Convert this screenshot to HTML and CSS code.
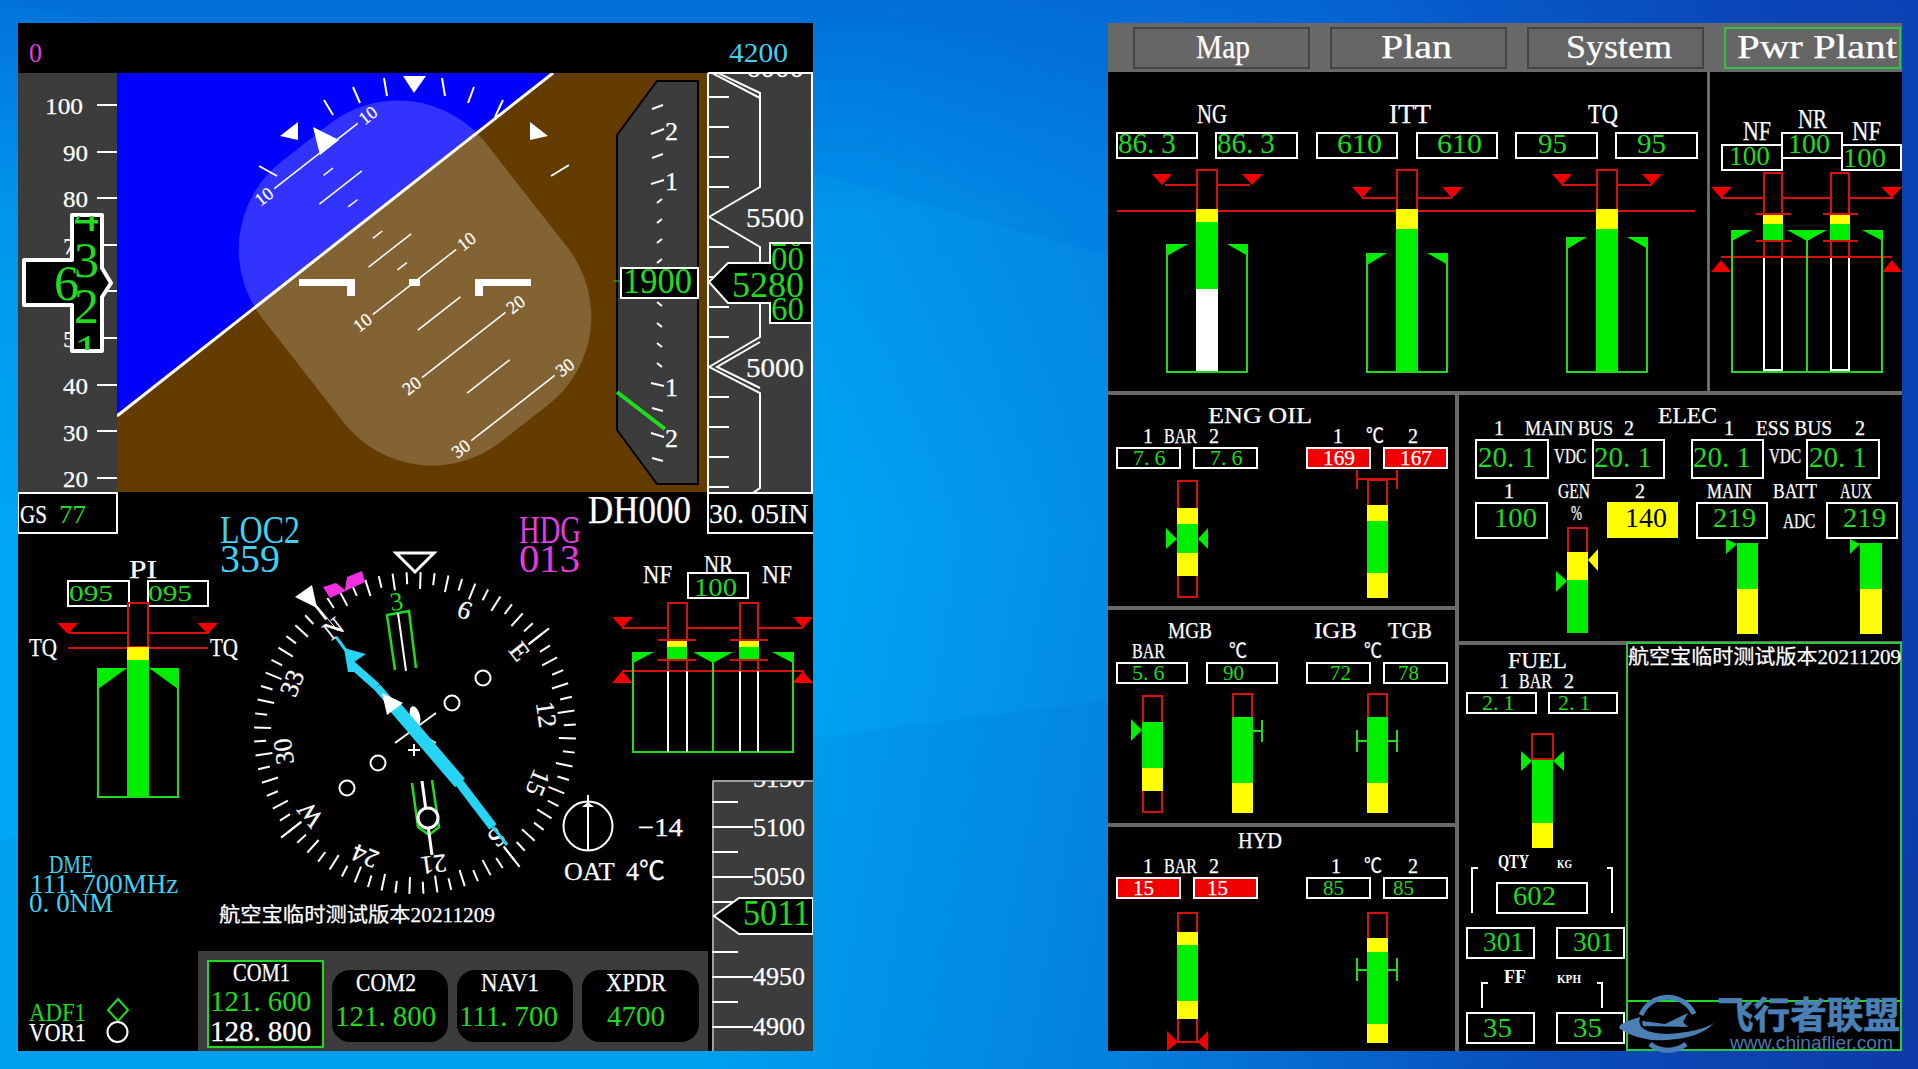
FILE: index.html
```html
<!DOCTYPE html>
<html lang="zh">
<head>
<meta charset="utf-8">
<title>MFD / PFD</title>
<link rel="stylesheet" href="styles.css">
</head>
<body>
<svg class="beams" viewBox="0 0 1918 1069">
  <polygon class="beam-up" points="0,0 1918,0 1918,487 813,172 0,0"/>
  <polygon class="beam-down" points="0,1069 1918,1069 1918,596 813,738 0,840"/>
</svg>

<section class="pfd">
<svg viewBox="18 23 795 1028">
  <defs>
    <clipPath id="att"><rect x="117" y="73" width="591" height="419"/></clipPath>
    <clipPath id="spd"><rect x="72" y="216" width="30" height="134"/></clipPath>
    <clipPath id="altc"><rect x="771" y="244" width="40" height="78"/></clipPath>
    <clipPath id="alttape"><rect x="708" y="74" width="105" height="418"/></clipPath>
    <clipPath id="alt2"><rect x="712" y="781" width="101" height="270"/></clipPath>
    <g id="t10"><line x1="415" y1="572" x2="415" y2="589"/><line x1="415" y1="572" x2="415" y2="584" transform="rotate(5 415 733)"/></g>
    <g id="t30"><use href="#t10"/><use href="#t10" transform="rotate(10 415 733)"/><use href="#t10" transform="rotate(20 415 733)"/></g>
  </defs>
  <rect class="black" x="18" y="23" width="795" height="1028"/>
  <text class="m f27" x="29" y="62" textLength="13" lengthAdjust="spacingAndGlyphs">0</text>
  <text class="c f27" x="729" y="62" textLength="59" lengthAdjust="spacingAndGlyphs">4200</text>

  <!-- speed tape -->
  <rect class="tape" x="18" y="73" width="99" height="419"/>
  <g class="w f24">
    <text x="45" y="114" textLength="38" lengthAdjust="spacingAndGlyphs">100</text>
    <text x="63" y="161" textLength="25" lengthAdjust="spacingAndGlyphs">90</text>
    <text x="63" y="207" textLength="25" lengthAdjust="spacingAndGlyphs">80</text>
    <text x="63" y="254" textLength="25" lengthAdjust="spacingAndGlyphs">70</text>
    <text x="63" y="347" textLength="25" lengthAdjust="spacingAndGlyphs">50</text>
    <text x="63" y="394" textLength="25" lengthAdjust="spacingAndGlyphs">40</text>
    <text x="63" y="441" textLength="25" lengthAdjust="spacingAndGlyphs">30</text>
    <text x="63" y="487" textLength="25" lengthAdjust="spacingAndGlyphs">20</text>
  </g>
  <g class="wl s2">
    <path d="M97 105H117M97 152H117M97 198H117M97 245H117M97 291H117M97 338H117M97 385H117M97 431H117M97 478H117"/>
  </g>

  <!-- attitude -->
  <g clip-path="url(#att)">
    <rect class="sky" x="117" y="73" width="591" height="419"/>
    <polygon class="ground" points="117,416 553,73 708,73 708,492 117,492"/>
    <rect class="mask" x="-142" y="-178" width="284" height="356" rx="112" transform="translate(415 283) rotate(-38)"/>
    <line class="wl s3" x1="117" y1="416" x2="553" y2="73"/>
  </g>
  <g transform="translate(414.5 282) rotate(-38)">
    <path class="wl s15" d="M-53 0H53M-27 40H27M-53 80H53M-27 120H27M-53 160H53M-6 -20H6M-27 -40H27M-6 -60H6M-6 -100H6M-27 -120H27M-6 -140H6M-53 -160H53"/>
    <g class="w f18 mid">
      <text x="-66" y="6">10</text><text x="66" y="6">10</text>
      <text x="-66" y="86">20</text><text x="66" y="86">20</text>
      <text x="-66" y="166">30</text><text x="66" y="166">30</text>
      <text x="-66" y="-154">10</text><text x="66" y="-154">10</text>
    </g>
  </g>
  <!-- roll scale -->
  <path class="wl s2" d="M442 78L445 96M474 87L468 103M503 100L495 117M384 78L387 96M353 87L360 103M324 100L333 115M259 166L277 176M551 176L569 165"/>
  <polygon class="wf" points="403,76 426,76 414,93"/>
  <polygon class="wf" points="298,122 280,136 298,140"/>
  <polygon class="wf" points="530,122 548,136 530,140"/>
  <polygon class="wf" points="313,127 339,140 320,155"/>
  <path class="wf" d="M299 279H355V296H347V286H299Z"/>
  <path class="wf" d="M531 279H475V296H483V286H531Z"/>
  <rect class="wf" x="409" y="279" width="11" height="7"/>

  <!-- vsi -->
  <polygon class="vsi" points="657,81 698,81 698,484 657,484 617,430 617,135"/>
  <path class="wl s2" d="M652 109L663 105M651 134L664 129M652 158L663 154M651 184L664 180M657 203L662 199M657 223L662 219M657 243L662 239M657 263L662 259M657 302L662 306M657 323L662 327M657 343L662 347M657 363L662 367M651 383L664 386M652 408L663 411M651 433L664 437M652 458L663 461"/>
  <g class="w f26">
    <text x="665" y="140">2</text><text x="665" y="190">1</text>
    <text x="665" y="396">1</text><text x="665" y="447">2</text>
  </g>
  <line class="gl s4" x1="617" y1="392" x2="665" y2="429"/>
  <line class="gl s1" x1="614" y1="281" x2="627" y2="281"/>
  <rect class="wb" x="621" y="268" width="77" height="30"/>
  <text class="g f35" x="623" y="293" textLength="69" lengthAdjust="spacingAndGlyphs">1900</text>

  <!-- speed pointer -->
  <polygon class="spd" points="24,260 72,260 72,215 102,215 102,268 111,283 102,297 102,351 72,351 72,305 24,305"/>
  <g class="g f50" clip-path="url(#spd)">
    <text x="74" y="231">4</text><text x="74" y="277">3</text><text x="74" y="323">2</text><text x="74" y="369">1</text>
  </g>
  <text class="g f50" x="54" y="300">6</text>

  <!-- altitude tape -->
  <rect class="tape" x="708" y="73" width="105" height="419"/>
  <g clip-path="url(#alttape)">
    <text class="w f27" x="746" y="77" textLength="58" lengthAdjust="spacingAndGlyphs">6000</text>
    <path class="wl s2" d="M709 97H729M709 127H729M709 157H729M709 187H729M709 247H729M709 277H729M709 307H729M709 337H729M709 397H729M709 427H729M709 457H729M709 487H729"/>
    <path class="wl s2 none" d="M718 73L760 93V187L709 217L760 247V337L709 367L760 393V488L750 495"/>
    <path class="wl s2 none" d="M712 73L760 98M760 342L717 367L760 388"/>
    <text class="w f27" x="746" y="227" textLength="58" lengthAdjust="spacingAndGlyphs">5500</text>
    <text class="w f27" x="746" y="377" textLength="58" lengthAdjust="spacingAndGlyphs">5000</text>
  </g>
  <path class="wl s2 none" d="M708 73V492M708 73H813M812 73V492"/>
  <polygon class="wb" points="709,282 728,263 770,263 770,243 812,243 812,323 770,323 770,303 728,303"/>
  <text class="g f36" x="732" y="297" textLength="72" lengthAdjust="spacingAndGlyphs">5280</text>
  <g class="g f34" clip-path="url(#altc)">
    <text x="771" y="246" textLength="33" lengthAdjust="spacingAndGlyphs">20</text>
    <text x="771" y="270" textLength="33" lengthAdjust="spacingAndGlyphs">00</text>
    <text x="771" y="320" textLength="33" lengthAdjust="spacingAndGlyphs">60</text>
  </g>

  <!-- bottom strip -->
  <rect class="wb" x="18" y="493" width="99" height="40"/>
  <text class="w f26" x="20" y="523" textLength="27" lengthAdjust="spacingAndGlyphs">GS</text>
  <text class="g f26" x="59" y="523" textLength="27" lengthAdjust="spacingAndGlyphs">77</text>
  <text class="w f40" x="588" y="523" textLength="103" lengthAdjust="spacingAndGlyphs">DH000</text>
  <path class="wl s2 none" d="M813 493H708V533H813"/>
  <text class="w f28" x="709" y="523">30.<tspan dx="7">05IN</tspan></text>
  <text class="c f40" x="220" y="543" textLength="80" lengthAdjust="spacingAndGlyphs">LOC2</text>
  <text class="c f40" x="220" y="572" textLength="60" lengthAdjust="spacingAndGlyphs">359</text>
  <text class="m f40" x="519" y="543" textLength="62" lengthAdjust="spacingAndGlyphs">HDG</text>
  <text class="m f40" x="519" y="572" textLength="61" lengthAdjust="spacingAndGlyphs">013</text>

  <!-- PI / TQ -->
  <text class="w f26" x="129" y="578" textLength="28" lengthAdjust="spacingAndGlyphs">PI</text>
  <rect class="wb" x="68" y="581" width="61" height="25"/>
  <rect class="wb" x="148" y="581" width="60" height="25"/>
  <text class="g f24" x="69" y="601" textLength="44" lengthAdjust="spacingAndGlyphs">095</text>
  <text class="g f24" x="148" y="601" textLength="44" lengthAdjust="spacingAndGlyphs">095</text>
  <rect class="rl" x="128" y="603" width="20" height="44"/>
  <polygon class="rf" points="57,623 78,623 68,634"/>
  <polygon class="rf" points="197,623 218,623 208,634"/>
  <path class="rl" d="M69 633H128M148 633H208M68 648H128M148 648H208"/>
  <rect class="ye" x="127" y="647" width="22" height="13"/>
  <rect class="gn" x="127" y="660" width="22" height="137"/>
  <path class="gl s2 none" d="M98 668V797H178V668"/>
  <polygon class="gn" points="98,668 127,668 98,689"/>
  <polygon class="gn" points="149,668 178,668 178,689"/>
  <text class="w f26" x="29" y="656" textLength="28" lengthAdjust="spacingAndGlyphs">TQ</text>
  <text class="w f26" x="210" y="656" textLength="28" lengthAdjust="spacingAndGlyphs">TQ</text>

  <!-- NF / NR -->
  <text class="w f26" x="643" y="583" textLength="29" lengthAdjust="spacingAndGlyphs">NF</text>
  <text class="w f26" x="762" y="583" textLength="30" lengthAdjust="spacingAndGlyphs">NF</text>
  <text class="w f26" x="704" y="573" textLength="29" lengthAdjust="spacingAndGlyphs">NR</text>
  <rect class="wb" x="688" y="573" width="60" height="25"/>
  <text class="g f26" x="694" y="596" textLength="43" lengthAdjust="spacingAndGlyphs">100</text>
  <path class="rl" d="M668 641V603H687V641M740 641V603H758V641M622 628H668M687 628H740M758 628H803M658 640H696M730 640H768M658 660H696M730 660H768M668 660V671M687 660V671M740 660V671M758 660V671M622 671H804"/>
  <polygon class="rf" points="612,617 633,617 622,628"/>
  <polygon class="rf" points="793,617 813,617 803,628"/>
  <polygon class="rf" points="622,671 612,683 633,683"/>
  <polygon class="rf" points="803,671 792,683 813,683"/>
  <rect class="ye" x="667" y="641" width="20" height="6"/>
  <rect class="gn" x="667" y="647" width="20" height="12"/>
  <rect class="ye" x="739" y="641" width="20" height="6"/>
  <rect class="gn" x="739" y="647" width="20" height="12"/>
  <path class="gl s2 none" d="M633 652V752H793V652M713 652V752"/>
  <polygon class="gn" points="633,652 654,652 633,663"/>
  <polygon class="gn" points="693,652 733,652 713,663"/>
  <polygon class="gn" points="772,652 793,652 793,663"/>
  <path class="wl s2 none" d="M668 671V752M687 671V752M740 671V752M758 671V752"/>

  <!-- compass -->
  <g class="wl s2 ring" transform="rotate(-38 415 733)">
    <use href="#t30"/><use href="#t30" transform="rotate(30 415 733)"/><use href="#t30" transform="rotate(60 415 733)"/><use href="#t30" transform="rotate(90 415 733)"/><use href="#t30" transform="rotate(120 415 733)"/><use href="#t30" transform="rotate(150 415 733)"/><use href="#t30" transform="rotate(180 415 733)"/><use href="#t30" transform="rotate(210 415 733)"/><use href="#t30" transform="rotate(240 415 733)"/><use href="#t30" transform="rotate(270 415 733)"/><use href="#t30" transform="rotate(300 415 733)"/><use href="#t30" transform="rotate(330 415 733)"/>
    <path d="M415 563V588M415 878V903M560 733H585M245 733H270"/>
  </g>
  <g class="w f26 mid" transform="rotate(-38 415 733)">
    <text x="415" y="609">N</text>
    <text class="g" x="415" y="609" transform="rotate(30 415 733)">3</text>
    <text x="415" y="609" transform="rotate(60 415 733)">6</text>
    <text x="415" y="609" transform="rotate(90 415 733)">E</text>
    <text x="415" y="609" transform="rotate(120 415 733)">12</text>
    <text x="415" y="609" transform="rotate(150 415 733)">15</text>
    <text x="415" y="609" transform="rotate(180 415 733)">S</text>
    <text x="415" y="609" transform="rotate(210 415 733)">21</text>
    <text x="415" y="609" transform="rotate(240 415 733)">24</text>
    <text x="415" y="609" transform="rotate(270 415 733)">W</text>
    <text x="415" y="609" transform="rotate(300 415 733)">30</text>
    <text x="415" y="609" transform="rotate(330 415 733)">33</text>
  </g>
  <polygon class="mg" points="323,587 336,583 345,590 347,577 362,571 365,582 330,598"/>
  <polygon class="hollow" points="396,553 434,553 415,572"/>
  <line class="wl s1" x1="312" y1="600" x2="338" y2="631"/>
  <polygon class="wf" points="295,597 312,585 317,608"/>
  <path class="gl s25 none" d="M395 670L387 615L409 611L416 668"/>
  <line class="wl s2" x1="398" y1="613" x2="406" y2="671"/>
  <path class="wl s2 none" d="M395 743L436 713M410 728L436 743M414 744V756M408 750H420"/>
  <ellipse class="wf" cx="415" cy="716" rx="5" ry="10" transform="rotate(-15 415 716)"/>
  <circle class="dot" cx="483" cy="678" r="7.5"/>
  <circle class="dot" cx="452" cy="703" r="7.5"/>
  <circle class="dot" cx="378" cy="763" r="7.5"/>
  <circle class="dot" cx="347" cy="788" r="7.5"/>
  <path class="gl s25 none" d="M412 783L418 827L429 835L439 827L432 780"/>
  <line class="wl s3" x1="422" y1="781" x2="432" y2="855"/>
  <circle class="dot s3" cx="428" cy="818" r="10"/>
  <path class="cyl s3 none" d="M336 637L353 660M493 827L507 845"/>
  <polygon class="cyf" points="344,648 366,654 354,662 362,672 348,672"/>
  <line class="cyl s8" x1="350" y1="663" x2="377" y2="687"/>
  <line class="cyl s13" x1="395" y1="707" x2="460" y2="783"/>
  <line class="cyl s9" x1="458" y1="781" x2="493" y2="827"/>
  <line class="cyl s8" x1="377" y1="687" x2="397" y2="710"/>
  <polygon class="wf" points="382,693 403,703 387,715"/>

  <!-- OAT -->
  <circle class="none wl s2" cx="588" cy="826" r="24.5"/>
  <line class="wl s2" x1="588" y1="795" x2="588" y2="851"/>
  <polygon class="wf" points="588,802 582,807 594,807"/>
  <text class="w f26" x="638" y="836" textLength="45" lengthAdjust="spacingAndGlyphs">−14</text>
  <text class="w f26" x="564" y="880">OAT<tspan x="626">4℃</tspan></text>

  <!-- DME -->
  <text class="c f25" x="49" y="873" textLength="44" lengthAdjust="spacingAndGlyphs">DME</text>
  <text class="c f27" x="30" y="893">111.<tspan dx="7">700MHz</tspan></text>
  <text class="c f27" x="29" y="912">0.<tspan dx="7">0NM</tspan></text>
  <text class="w f20" x="219" y="922" textLength="276" lengthAdjust="spacingAndGlyphs">航空宝临时测试版本20211209</text>

  <!-- radios -->
  <text class="g f25" x="29" y="1021" textLength="57" lengthAdjust="spacingAndGlyphs">ADF1</text>
  <polygon class="gl s2 none" points="118,999 128,1010 118,1021 108,1010"/>
  <text class="w f25" x="29" y="1041" textLength="57" lengthAdjust="spacingAndGlyphs">VOR1</text>
  <circle class="wl s2 none" cx="117.5" cy="1032" r="10"/>
  <rect class="tape" x="198" y="951" width="510" height="100"/>
  <rect class="black gl s2" x="208" y="961" width="115" height="86"/>
  <text class="w f26" x="233" y="981" textLength="57" lengthAdjust="spacingAndGlyphs">COM1</text>
  <text class="g f29" x="210" y="1011">121.<tspan dx="7">600</tspan></text>
  <text class="w f29" x="210" y="1041">128.<tspan dx="7">800</tspan></text>
  <rect class="black" x="332" y="970" width="116" height="72" rx="18"/>
  <text class="w f26" x="356" y="991" textLength="60" lengthAdjust="spacingAndGlyphs">COM2</text>
  <text class="g f29" x="335" y="1026">121.<tspan dx="7">800</tspan></text>
  <rect class="black" x="457" y="970" width="116" height="72" rx="18"/>
  <text class="w f26" x="481" y="991" textLength="58" lengthAdjust="spacingAndGlyphs">NAV1</text>
  <text class="g f29" x="459" y="1026">111.<tspan dx="7">700</tspan></text>
  <rect class="black" x="582" y="970" width="117" height="72" rx="18"/>
  <text class="w f26" x="606" y="991" textLength="60" lengthAdjust="spacingAndGlyphs">XPDR</text>
  <text class="g f29" x="607" y="1026">4700</text>

  <!-- lower altitude scale -->
  <rect class="tape" x="712" y="780" width="101" height="271"/>
  <g clip-path="url(#alt2)">
    <text class="w f26" x="753" y="787" textLength="52" lengthAdjust="spacingAndGlyphs">5150</text>
    <path class="wl s2" d="M712 802H738M712 827H753M712 852H738M712 877H753M712 902H738M712 952H738M712 977H753M712 1002H738M712 1027H753"/>
    <text class="w f26" x="753" y="836" textLength="52" lengthAdjust="spacingAndGlyphs">5100</text>
    <text class="w f26" x="753" y="885" textLength="52" lengthAdjust="spacingAndGlyphs">5050</text>
    <text class="w f26" x="753" y="985" textLength="52" lengthAdjust="spacingAndGlyphs">4950</text>
    <text class="w f26" x="753" y="1035" textLength="52" lengthAdjust="spacingAndGlyphs">4900</text>
  </g>
  <path class="wl s1 none" d="M713 1051V781H813"/>
  <polygon class="wb" points="714,916 739,898 813,898 813,934 739,934"/>
  <text class="g f35" x="743" y="925" textLength="67" lengthAdjust="spacingAndGlyphs">5011</text>
</svg>
</section>

<section class="mfd">
  <nav class="tabs">
    <div class="tab"><svg viewBox="0 0 173 38"><text class="w f34" x="61" y="29" textLength="54" lengthAdjust="spacingAndGlyphs">Map</text></svg></div>
    <div class="tab"><svg viewBox="0 0 173 38"><text class="w f34" x="49" y="29" textLength="71" lengthAdjust="spacingAndGlyphs">Plan</text></svg></div>
    <div class="tab"><svg viewBox="0 0 173 38"><text class="w f34" x="37" y="29" textLength="106" lengthAdjust="spacingAndGlyphs">System</text></svg></div>
    <div class="tab tab-on"><svg viewBox="0 0 173 38"><text class="w f34" x="11" y="29" textLength="160" lengthAdjust="spacingAndGlyphs">Pwr Plant</text></svg></div>
  </nav>

  <div class="eng-row">
    <div class="panel eng">
      <svg viewBox="1108 72 599 319">
        <text class="w f27" x="1197" y="123" textLength="30" lengthAdjust="spacingAndGlyphs">NG</text>
        <text class="w f27" x="1389" y="123" textLength="42" lengthAdjust="spacingAndGlyphs">ITT</text>
        <text class="w f27" x="1588" y="123" textLength="30" lengthAdjust="spacingAndGlyphs">TQ</text>
        <rect class="wb" x="1117" y="133" width="80" height="25"/><rect class="wb" x="1216" y="133" width="81" height="25"/>
        <rect class="wb" x="1317" y="133" width="80" height="25"/><rect class="wb" x="1417" y="133" width="80" height="25"/>
        <rect class="wb" x="1516" y="133" width="81" height="25"/><rect class="wb" x="1616" y="133" width="81" height="25"/>
        <text class="g f29" x="1118" y="153">86.<tspan dx="7">3</tspan></text>
        <text class="g f29" x="1217" y="153">86.<tspan dx="7">3</tspan></text>
        <text class="g f27" x="1337" y="153" textLength="45" lengthAdjust="spacingAndGlyphs">610</text>
        <text class="g f27" x="1437" y="153" textLength="45" lengthAdjust="spacingAndGlyphs">610</text>
        <text class="g f27" x="1538" y="153" textLength="29" lengthAdjust="spacingAndGlyphs">95</text>
        <text class="g f27" x="1637" y="153" textLength="29" lengthAdjust="spacingAndGlyphs">95</text>

        <path class="rl" d="M1117 211H1695M1197 209V170H1217V209M1397 209V170H1417V209M1597 209V170H1617V209M1165 185H1197M1217 185H1250M1362 198H1397M1417 198H1452M1562 185H1597M1617 185H1652"/>
        <polygon class="rf" points="1152,174 1172,174 1162,185"/><polygon class="rf" points="1242,174 1263,174 1252,185"/>
        <polygon class="rf" points="1352,187 1372,187 1362,198"/><polygon class="rf" points="1442,187 1463,187 1452,198"/>
        <polygon class="rf" points="1552,174 1572,174 1562,185"/><polygon class="rf" points="1642,174 1662,174 1652,185"/>

        <rect class="ye" x="1196" y="209" width="22" height="13"/><rect class="gn" x="1196" y="222" width="22" height="67"/><rect class="wf" x="1196" y="289" width="22" height="83"/>
        <path class="gl s2 none" d="M1167 244V372H1247V244"/>
        <polygon class="gn" points="1167,244 1188,244 1167,256"/><polygon class="gn" points="1227,244 1248,244 1248,256"/>

        <rect class="ye" x="1396" y="209" width="22" height="20"/><rect class="gn" x="1396" y="229" width="22" height="143"/>
        <path class="gl s2 none" d="M1367 253V372H1447V253"/>
        <polygon class="gn" points="1367,253 1387,253 1367,265"/><polygon class="gn" points="1427,253 1448,253 1448,265"/>

        <rect class="ye" x="1596" y="209" width="22" height="20"/><rect class="gn" x="1596" y="229" width="22" height="143"/>
        <path class="gl s2 none" d="M1567 237V372H1647V237"/>
        <polygon class="gn" points="1567,237 1587,237 1567,249"/><polygon class="gn" points="1627,237 1648,237 1648,249"/>
      </svg>
    </div>
    <div class="panel rotor">
      <svg viewBox="1710 72 192 319">
        <text class="w f27" x="1743" y="140" textLength="28" lengthAdjust="spacingAndGlyphs">NF</text>
        <text class="w f27" x="1798" y="128" textLength="29" lengthAdjust="spacingAndGlyphs">NR</text>
        <text class="w f27" x="1852" y="140" textLength="29" lengthAdjust="spacingAndGlyphs">NF</text>
        <rect class="wb" x="1722" y="145" width="60" height="25"/>
        <rect class="wb" x="1842" y="145" width="59" height="25"/>
        <rect class="wb" x="1782" y="133" width="60" height="25"/>
        <text class="g f27" x="1729" y="165" textLength="41" lengthAdjust="spacingAndGlyphs">100</text>
        <text class="g f27" x="1788" y="153" textLength="42" lengthAdjust="spacingAndGlyphs">100</text>
        <text class="g f27" x="1843" y="167" textLength="43" lengthAdjust="spacingAndGlyphs">100</text>
        <path class="rl" d="M1764 215V173H1782V215M1831 215V173H1849V215M1721 198H1764M1782 198H1831M1849 198H1893M1756 214H1791M1823 214H1858M1756 241H1791M1823 241H1858M1764 241V257M1782 241V257M1831 241V257M1849 241V257M1721 257H1892"/>
        <polygon class="rf" points="1711,187 1732,187 1721,198"/><polygon class="rf" points="1881,187 1902,187 1892,198"/>
        <polygon class="rf" points="1721,260 1711,272 1731,272"/><polygon class="rf" points="1892,260 1882,272 1902,272"/>
        <rect class="ye" x="1763" y="215" width="20" height="9"/><rect class="gn" x="1763" y="224" width="20" height="16"/>
        <rect class="ye" x="1830" y="215" width="20" height="9"/><rect class="gn" x="1830" y="224" width="20" height="16"/>
        <path class="gl s2 none" d="M1732 230V372H1882V230M1807 232V372"/>
        <polygon class="gn" points="1732,230 1752,230 1732,241"/>
        <polygon class="gn" points="1787,230 1827,230 1807,241"/>
        <polygon class="gn" points="1862,230 1883,230 1883,241"/>
        <path class="wl s2 none" d="M1764 258V370H1782V258M1831 258V370H1849V258"/>
      </svg>
    </div>
  </div>

  <div class="sys-row">
    <div class="sys-left">
      <div class="panel oil">
        <svg viewBox="1108 395 347 211">
          <text class="w f24" x="1208" y="423" textLength="104" lengthAdjust="spacingAndGlyphs">ENG OIL</text>
          <g class="w f20">
            <text x="1143" y="443">1</text>
            <text x="1164" y="443" textLength="33" lengthAdjust="spacingAndGlyphs">BAR</text>
            <text x="1209" y="443">2</text>
            <text x="1333" y="443">1</text>
            <text x="1366" y="443" textLength="18" lengthAdjust="spacingAndGlyphs">℃</text>
            <text x="1408" y="443">2</text>
          </g>
          <rect class="wb" x="1117" y="448" width="63" height="20"/><rect class="wb" x="1194" y="448" width="63" height="20"/>
          <rect class="wr" x="1307" y="448" width="63" height="20"/><rect class="wr" x="1384" y="448" width="63" height="20"/>
          <text class="g f22" x="1133" y="465">7.<tspan dx="5">6</tspan></text>
          <text class="g f22" x="1210" y="465">7.<tspan dx="5">6</tspan></text>
          <text class="w f22" x="1323" y="465" textLength="32" lengthAdjust="spacingAndGlyphs">169</text>
          <text class="w f22" x="1400" y="465" textLength="32" lengthAdjust="spacingAndGlyphs">167</text>
          <rect class="rl" x="1178" y="481" width="19" height="116"/>
          <rect class="ye" x="1177" y="508" width="21" height="16"/><rect class="gn" x="1177" y="524" width="21" height="29"/><rect class="ye" x="1177" y="553" width="21" height="23"/>
          <polygon class="gn" points="1166,528 1177,539 1166,549"/><polygon class="gn" points="1208,528 1198,539 1208,549"/>
          <rect class="rl" x="1368" y="480" width="19" height="30"/>
          <rect class="ye" x="1367" y="505" width="21" height="16"/><rect class="gn" x="1367" y="521" width="21" height="52"/><rect class="ye" x="1367" y="573" width="21" height="25"/>
          <path class="rl" d="M1357 479H1397M1357 470V489M1397 470V489"/>
        </svg>
      </div>
      <div class="panel gear">
        <svg viewBox="1108 610 347 213">
          <text class="w f24" x="1168" y="638" textLength="44" lengthAdjust="spacingAndGlyphs">MGB</text>
          <text class="w f24" x="1314" y="638" textLength="43" lengthAdjust="spacingAndGlyphs">IGB</text>
          <text class="w f24" x="1388" y="638" textLength="44" lengthAdjust="spacingAndGlyphs">TGB</text>
          <g class="w f20">
            <text x="1132" y="658" textLength="33" lengthAdjust="spacingAndGlyphs">BAR</text>
            <text x="1229" y="658" textLength="18" lengthAdjust="spacingAndGlyphs">℃</text>
            <text x="1364" y="658" textLength="18" lengthAdjust="spacingAndGlyphs">℃</text>
          </g>
          <rect class="wb" x="1117" y="663" width="70" height="20"/><rect class="wb" x="1207" y="663" width="70" height="20"/>
          <rect class="wb" x="1307" y="663" width="63" height="20"/><rect class="wb" x="1384" y="663" width="63" height="20"/>
          <text class="g f22" x="1132" y="680">5.<tspan dx="5">6</tspan></text>
          <text class="g f22" x="1223" y="680" textLength="21" lengthAdjust="spacingAndGlyphs">90</text>
          <text class="g f22" x="1330" y="680" textLength="21" lengthAdjust="spacingAndGlyphs">72</text>
          <text class="g f22" x="1398" y="680" textLength="21" lengthAdjust="spacingAndGlyphs">78</text>
          <rect class="rl" x="1143" y="696" width="19" height="116"/>
          <rect class="gn" x="1142" y="722" width="21" height="46"/><rect class="ye" x="1142" y="768" width="21" height="23"/>
          <polygon class="gn" points="1131,719 1142,730 1131,741"/>
          <rect class="rl" x="1233" y="694" width="19" height="30"/>
          <rect class="gn" x="1232" y="717" width="21" height="66"/><rect class="ye" x="1232" y="783" width="21" height="30"/>
          <path class="gl s2 none" d="M1253 731H1262M1262 720V742"/>
          <rect class="rl" x="1368" y="694" width="19" height="30"/>
          <rect class="gn" x="1367" y="717" width="21" height="66"/><rect class="ye" x="1367" y="783" width="21" height="30"/>
          <path class="gl s2 none" d="M1357 741H1367M1357 730V752M1388 741H1397M1397 730V752"/>
        </svg>
      </div>
      <div class="panel hyd">
        <svg viewBox="1108 827 347 224">
          <text class="w f24" x="1238" y="848" textLength="44" lengthAdjust="spacingAndGlyphs">HYD</text>
          <g class="w f20">
            <text x="1143" y="873">1</text>
            <text x="1164" y="873" textLength="33" lengthAdjust="spacingAndGlyphs">BAR</text>
            <text x="1209" y="873">2</text>
            <text x="1331" y="873">1</text>
            <text x="1364" y="873" textLength="18" lengthAdjust="spacingAndGlyphs">℃</text>
            <text x="1408" y="873">2</text>
          </g>
          <rect class="wr" x="1117" y="878" width="63" height="20"/><rect class="wr" x="1194" y="878" width="63" height="20"/>
          <rect class="wb" x="1307" y="878" width="63" height="20"/><rect class="wb" x="1384" y="878" width="63" height="20"/>
          <text class="w f22" x="1133" y="895" textLength="21" lengthAdjust="spacingAndGlyphs">15</text>
          <text class="w f22" x="1207" y="895" textLength="21" lengthAdjust="spacingAndGlyphs">15</text>
          <text class="g f22" x="1323" y="895" textLength="21" lengthAdjust="spacingAndGlyphs">85</text>
          <text class="g f22" x="1393" y="895" textLength="21" lengthAdjust="spacingAndGlyphs">85</text>
          <rect class="rl" x="1178" y="913" width="19" height="129"/>
          <rect class="ye" x="1177" y="932" width="21" height="13"/><rect class="gn" x="1177" y="945" width="21" height="56"/><rect class="ye" x="1177" y="1001" width="21" height="18"/>
          <polygon class="rf" points="1167,1031 1178,1042 1167,1051"/><polygon class="rf" points="1208,1031 1197,1042 1208,1051"/>
          <rect class="rl" x="1368" y="913" width="19" height="28"/>
          <rect class="ye" x="1367" y="938" width="21" height="14"/><rect class="gn" x="1367" y="952" width="21" height="72"/><rect class="ye" x="1367" y="1024" width="21" height="19"/>
          <path class="gl s2 none" d="M1357 970H1367M1357 958V981M1388 970H1397M1397 958V981"/>
        </svg>
      </div>
    </div>

    <div class="sys-right">
      <div class="panel elec">
        <svg viewBox="1459 395 443 246">
          <text class="w f24" x="1658" y="423" textLength="59" lengthAdjust="spacingAndGlyphs">ELEC</text>
          <g class="w f20">
            <text x="1494" y="435">1</text>
            <text x="1525" y="435" textLength="88" lengthAdjust="spacingAndGlyphs">MAIN BUS</text>
            <text x="1624" y="435">2</text>
            <text x="1724" y="435">1</text>
            <text x="1756" y="435" textLength="76" lengthAdjust="spacingAndGlyphs">ESS BUS</text>
            <text x="1855" y="435">2</text>
            <text x="1504" y="498">1</text>
            <text x="1558" y="498" textLength="32" lengthAdjust="spacingAndGlyphs">GEN</text>
            <text x="1635" y="498">2</text>
            <text x="1707" y="498" textLength="45" lengthAdjust="spacingAndGlyphs">MAIN</text>
            <text x="1773" y="498" textLength="44" lengthAdjust="spacingAndGlyphs">BATT</text>
            <text x="1840" y="498" textLength="32" lengthAdjust="spacingAndGlyphs">AUX</text>
            <text x="1783" y="528" textLength="32" lengthAdjust="spacingAndGlyphs">ADC</text>
            <text x="1554" y="463" textLength="32" lengthAdjust="spacingAndGlyphs">VDC</text>
            <text x="1769" y="463" textLength="32" lengthAdjust="spacingAndGlyphs">VDC</text>
            <text x="1571" y="520" textLength="11" lengthAdjust="spacingAndGlyphs">%</text>
          </g>
          <rect class="wb" x="1476" y="440" width="72" height="38"/><rect class="wb" x="1593" y="440" width="71" height="38"/>
          <rect class="wb" x="1692" y="440" width="71" height="38"/><rect class="wb" x="1807" y="440" width="72" height="38"/>
          <text class="g f29" x="1478" y="467">20.<tspan dx="7">1</tspan></text>
          <text class="g f29" x="1594" y="467">20.<tspan dx="7">1</tspan></text>
          <text class="g f29" x="1693" y="467">20.<tspan dx="7">1</tspan></text>
          <text class="g f29" x="1809" y="467">20.<tspan dx="7">1</tspan></text>
          <rect class="wb" x="1476" y="503" width="71" height="35"/>
          <rect class="ye" x="1607" y="502" width="71" height="36"/>
          <rect class="wb" x="1697" y="503" width="70" height="35"/>
          <rect class="wb" x="1827" y="503" width="70" height="35"/>
          <text class="g f28" x="1494" y="527" textLength="43" lengthAdjust="spacingAndGlyphs">100</text>
          <text class="k f28" x="1625" y="527" textLength="42" lengthAdjust="spacingAndGlyphs">140</text>
          <text class="g f28" x="1713" y="527" textLength="43" lengthAdjust="spacingAndGlyphs">219</text>
          <text class="g f28" x="1843" y="527" textLength="43" lengthAdjust="spacingAndGlyphs">219</text>
          <rect class="rl" x="1568" y="528" width="19" height="25"/>
          <rect class="ye" x="1567" y="552" width="21" height="28"/><rect class="gn" x="1567" y="580" width="21" height="53"/>
          <polygon class="gn" points="1556,571 1567,581 1556,592"/>
          <polygon class="ye" points="1598,549 1588,560 1598,571"/>
          <rect class="gn" x="1737" y="543" width="21" height="46"/><rect class="ye" x="1737" y="589" width="21" height="45"/>
          <polygon class="gn" points="1726,539 1737,544 1726,554"/>
          <rect class="gn" x="1860" y="543" width="22" height="46"/><rect class="ye" x="1860" y="589" width="22" height="45"/>
          <polygon class="gn" points="1850,539 1860,544 1850,554"/>
        </svg>
      </div>
      <div class="lower">
        <div class="panel fuel">
          <svg viewBox="1459 645 167 406">
            <text class="w f24" x="1508" y="668" textLength="59" lengthAdjust="spacingAndGlyphs">FUEL</text>
            <g class="w f20">
              <text x="1499" y="688">1</text>
              <text x="1519" y="688" textLength="33" lengthAdjust="spacingAndGlyphs">BAR</text>
              <text x="1564" y="688">2</text>
            </g>
            <rect class="wb" x="1467" y="693" width="69" height="20"/><rect class="wb" x="1549" y="693" width="68" height="20"/>
            <text class="g f22" x="1482" y="710">2.<tspan dx="5">1</tspan></text>
            <text class="g f22" x="1558" y="710">2.<tspan dx="5">1</tspan></text>
            <rect class="gn" x="1532" y="759" width="21" height="64"/><rect class="ye" x="1532" y="823" width="21" height="25"/>
            <polygon class="gn" points="1521,751 1532,761 1521,771"/><polygon class="gn" points="1564,751 1553,761 1564,771"/>
            <rect class="rl" x="1532" y="734" width="21" height="25"/>
            <text class="wb-t f18" x="1498" y="868" textLength="31" lengthAdjust="spacingAndGlyphs">QTY</text>
            <text class="wb-t f13" x="1557" y="868" textLength="15" lengthAdjust="spacingAndGlyphs">KG</text>
            <path class="wl s2 none" d="M1472 913V868H1478M1612 913V868H1607M1482 1008V983H1488M1602 1008V983H1597"/>
            <rect class="wb" x="1497" y="883" width="90" height="30"/>
            <text class="g f28" x="1513" y="905" textLength="43" lengthAdjust="spacingAndGlyphs">602</text>
            <rect class="wb" x="1467" y="928" width="67" height="30"/><rect class="wb" x="1557" y="928" width="67" height="30"/>
            <text class="g f28" x="1483" y="951" textLength="41" lengthAdjust="spacingAndGlyphs">301</text>
            <text class="g f28" x="1573" y="951" textLength="41" lengthAdjust="spacingAndGlyphs">301</text>
            <text class="wb-t f18" x="1504" y="983" textLength="22" lengthAdjust="spacingAndGlyphs">FF</text>
            <text class="wb-t f13" x="1557" y="983" textLength="24" lengthAdjust="spacingAndGlyphs">KPH</text>
            <rect class="wb" x="1467" y="1013" width="67" height="30"/><rect class="wb" x="1557" y="1013" width="67" height="30"/>
            <text class="g f28" x="1483" y="1037" textLength="29" lengthAdjust="spacingAndGlyphs">35</text>
            <text class="g f28" x="1573" y="1037" textLength="29" lengthAdjust="spacingAndGlyphs">35</text>
          </svg>
        </div>
        <div class="panel msg">
          <svg class="msg-svg" viewBox="1626 645 276 406">
            <rect class="msgbox" x="1627" y="643" width="274" height="407"/>
            <line class="gl s2" x1="1627" y1="1001" x2="1901" y2="1001"/>
            <text class="w f20" x="1628" y="664" textLength="273" lengthAdjust="spacingAndGlyphs">航空宝临时测试版本20211209</text>
          </svg>
        </div>
      </div>
    </div>
  </div>

  <svg class="mark" viewBox="1610 985 292 66">
    <path class="mark-ring" d="M1641 1015A29 29 0 0 1 1694 1014"/>
    <path class="mark-ring" d="M1650 1044A29 29 0 0 0 1686 1044"/>
    <path class="mark-fill" d="M1640 1017Q1615 1024 1620 1029Q1640 1042 1667 1040Q1700 1038 1714 1023Q1700 1032 1667 1034Q1635 1033 1640 1017Z"/>
    <polygon class="mark-fill" points="1642,1021 1665,1024 1688,1013 1683,1022 1688,1027 1643,1026"/>
    <text class="mark-cn" x="1717" y="1029" textLength="183" lengthAdjust="spacingAndGlyphs">飞行者联盟</text>
    <text class="mark-url" x="1730" y="1049" textLength="163" lengthAdjust="spacingAndGlyphs">www.chinaflier.com</text>
  </svg>
</section>
</body>
</html>
```
FILE: styles.css
```css
html, body { margin: 0; padding: 0; }
body {
  position: relative;
  width: 1918px;
  height: 1069px;
  overflow: hidden;
  background:
    linear-gradient(100deg, rgba(12,60,190,0) 42%, rgba(10,90,205,.45) 62%, rgba(12,64,180,.85) 82%, rgba(14,58,170,1) 100%),
    linear-gradient(180deg, rgba(3,105,215,.85) 0, rgba(3,120,222,.35) 20%, rgba(3,120,222,0) 50%),
    #00a6f6;
  font-family: "Liberation Serif", "Noto Sans CJK SC", serif;
}
.beams { position: absolute; left: 0; top: 0; width: 1918px; height: 1069px; }
.beam-up { fill: #0048c0; opacity: .08; }
.beam-down { fill: #004090; opacity: .06; }

.pfd { position: absolute; left: 18px; top: 23px; width: 795px; height: 1028px; }
.pfd svg, .panel svg, .tab svg { display: block; width: 100%; height: 100%; }

text { font-family: "Liberation Serif", "Noto Sans CJK SC", serif; }
.f13 { font-size: 13px; } .f18 { font-size: 18px; } .f20 { font-size: 20px; } .f22 { font-size: 22px; }
.f24 { font-size: 24px; } .f25 { font-size: 25px; } .f26 { font-size: 26px; } .f27 { font-size: 27px; }
.f28 { font-size: 28px; } .f29 { font-size: 29px; } .f34 { font-size: 34px; } .f35 { font-size: 35px; }
.f36 { font-size: 36px; } .f40 { font-size: 40px; } .f50 { font-size: 50px; }
.w { fill: #fff; stroke: #fff; stroke-width: .25; }
.g { fill: #1edc1e; stroke: none; } .c { fill: #3fd2f2; } .m { fill: #e23ce2; } .k { fill: #000; }
.wb-t { fill: #fff; font-weight: 700; }
.mid { text-anchor: middle; }

.black { fill: #000; }
.tape { fill: #3c3c3c; }
.sky { fill: #0000ff; }
.ground { fill: #643c00; }
.mask { fill: #fff; opacity: .2; }
.vsi { fill: #3c3c3c; stroke: #000; stroke-width: 2; }
.spd { fill: #000; stroke: #fff; stroke-width: 4; stroke-linejoin: round; }
.wb { fill: #000; stroke: #fff; stroke-width: 2; }
.wr { fill: #f00000; stroke: #fff; stroke-width: 2; }
.wf { fill: #fff; }
.rf { fill: #f00000; }
.rl { fill: none; stroke: #d81010; stroke-width: 2; }
.gn { fill: #00ee00; }
.ye { fill: #ffff00; }
.mg { fill: #f030e0; }
.hollow { fill: #000; stroke: #fff; stroke-width: 3; }
.dot { fill: #000; stroke: #fff; stroke-width: 2; }
.cyf { fill: #28d4f4; }
.wl { stroke: #fff; }
.gl { stroke: #1edc1e; }
.cyl { stroke: #28d4f4; }
.none { fill: none; }
.ring { fill: none; }
.s1 { stroke-width: 1; } .s15 { stroke-width: 1.5; } .s2 { stroke-width: 2; } .s25 { stroke-width: 2.5; }
.s3 { stroke-width: 3; } .s4 { stroke-width: 4; } .s8 { stroke-width: 8; } .s9 { stroke-width: 9; } .s13 { stroke-width: 13; }

.mfd {
  position: absolute;
  left: 1108px;
  top: 23px;
  width: 794px;
  height: 1028px;
  background: #696969;
  display: flex;
  flex-direction: column;
}
.tabs {
  height: 49px;
  box-sizing: border-box;
  padding: 4px 1px 3px 25px;
  display: flex;
  justify-content: space-between;
}
.tab {
  width: 177px;
  box-sizing: border-box;
  background: #666;
  border: 2px solid #444;
}
.tab-on { border-color: #2cc24a; }

.panel { background: #000; }
.eng-row { height: 319px; display: flex; gap: 3px; }
.eng { width: 599px; }
.rotor { flex: 1; }
.sys-row { flex: 1; margin-top: 4px; display: flex; gap: 4px; }
.sys-left { width: 347px; display: flex; flex-direction: column; gap: 4px; }
.oil { height: 211px; }
.gear { height: 213px; }
.hyd { height: 224px; }
.sys-right { flex: 1; display: flex; flex-direction: column; gap: 4px; }
.elec { height: 246px; }
.lower { flex: 1; display: flex; }
.fuel { width: 167px; }
.msg { flex: 1; }
.msg-svg { overflow: visible; }
.msgbox { fill: #000; stroke: #2cc83c; stroke-width: 2; }

.mark { position: absolute; left: 502px; top: 962px; width: 292px; height: 66px; overflow: visible; }
.mark-ring { fill: none; stroke: #4a80b5; stroke-width: 5; }
.mark-fill { fill: #4a80b5; }
.mark-cn { fill: #4a80b5; stroke: #4a80b5; stroke-width: .6; font-size: 37px; font-weight: 700; font-family: "Noto Sans CJK SC", sans-serif; }
.mark-url { fill: #4a78b0; font-size: 19px; font-family: "Liberation Sans", sans-serif; }
```
